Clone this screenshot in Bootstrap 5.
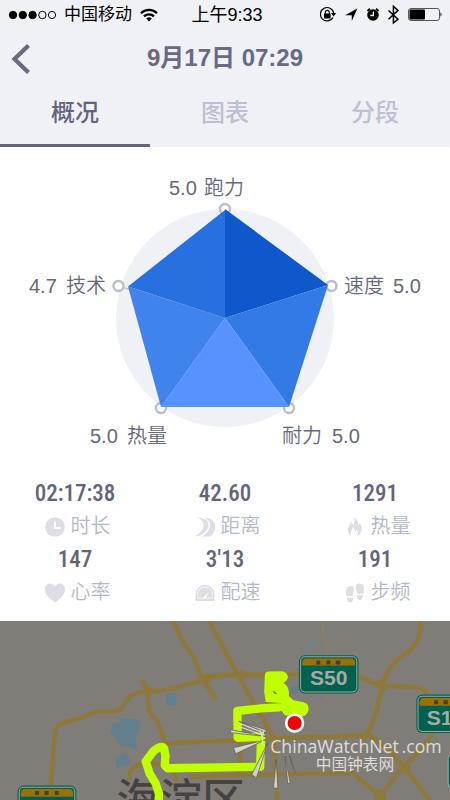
<!DOCTYPE html>
<html lang="zh-CN">
<head>
<meta charset="utf-8">
<meta name="viewport" content="width=device-width, initial-scale=1">
<title>9月17日 07:29</title>
<link href="https://cdn.jsdelivr.net/npm/bootstrap@5.3.0/dist/css/bootstrap.min.css" rel="stylesheet">
<style>
body { font-family: "Liberation Sans", "Noto Sans CJK SC", sans-serif; color: #62657a; background: #fff; }
.top-area { background: #f0f1f7; }
.status-line { height: 30px; color: #000; font-size: 17px; line-height: 30px; }
.status-time { font-size: 18px; }
.status-line svg, .meta svg, .back-btn svg { display: block; }
.title-line { height: 56px; }
.title-line h1 { font-size: 24px; line-height: 58px; font-weight: 700; color: #676a80; }
.back-btn { width: 44px; height: 56px; color: #676a80; }
.tabs-line a { height: 61px; line-height: 54px; font-size: 24px; font-weight: 500; color: #bcc0d2; border-bottom: 3px solid transparent; text-decoration: none; }
.tabs-line a.active { color: #62657a; border-bottom-color: #62657a; }
.chart text { font-size: 20px; fill: #66687c; font-weight: 350; }
.figures { padding-bottom: 14px; }
.figure-value { font-family: "Roboto Condensed", "Liberation Sans Narrow", "Liberation Sans", sans-serif; font-weight: 500; font-size: 23px; line-height: 37px; }
.meta { font-size: 20px; line-height: 29px; font-weight: 350; color: #b4b8cc; gap: 5px; padding-left: 6px; }
.meta svg { color: #dcdde5; }
.map-area { background: #807d79; min-height: 178px; }
.sign { font-family: "Liberation Sans", sans-serif; font-weight: 700; font-size: 63px; fill: #a8aaa6; }
.district { font-size: 128px; font-weight: 500; fill: #454341; }
.mark-en { font-family: "Open Sans", sans-serif; font-size: 53px; fill: #dedddb; }
.mark-cn { font-size: 47px; fill: #dedddb; }
</style>
<script src="https://cdn.jsdelivr.net/npm/bootstrap@5.3.0/dist/js/bootstrap.bundle.min.js"></script>
</head>
<body>
<div class="d-flex flex-column min-vh-100">
<header class="top-area">
  <div class="status-line d-flex align-items-center justify-content-between px-2">
    <div class="d-flex align-items-center gap-2">
      <svg width="48" height="10" viewBox="0 0 48 10" aria-hidden="true"><g stroke="#000" stroke-width="1"><circle cx="5" cy="5" r="3.7"/><circle cx="14.8" cy="5" r="3.7"/><circle cx="24.6" cy="5" r="3.7"/><g fill="none"><circle cx="34.4" cy="5" r="3.7"/><circle cx="44" cy="5" r="3.6"/></g></g></svg>
      <span>中国移动</span>
      <svg width="18" height="14" viewBox="0 0 18 14" fill="none" stroke="#000" stroke-width="2.3" aria-hidden="true"><path d="M1 5.2a11.4 11.4 0 0 1 16 0M4 8.4a7.1 7.1 0 0 1 10 0"/><path d="M6.2 10.6a4 4 0 0 1 5.6 0L9 13.5z" fill="#000" stroke="none"/></svg>
    </div>
    <span class="status-time pe-4">上午9:33</span>
    <svg width="122" height="20" viewBox="320 5 122 20" aria-hidden="true">
      <path d="M333 17.5a6.7 6.7 0 1 1 .8-4" fill="none" stroke="#000" stroke-width="1.2"/><path d="M331 13h5.2l-2.6 3.4z"/><rect x="324" y="13.5" width="6.6" height="5" rx=".6"/><path d="M325.3 14v-1.6a2 2 0 0 1 4 0V14" fill="none" stroke="#000" stroke-width="1.1"/>
      <path d="M345 15.3 357.3 8.5 351.8 21v-5.7z"/>
      <circle cx="373" cy="15" r="5.8"/><path d="M367.5 11l2.5-2.2M378.5 11l-2.5-2.2" stroke="#000" stroke-width="1.8"/><path d="M373.3 11.5v4h-3" stroke="#f0f1f7" stroke-width="1.3" fill="none"/>
      <path d="M388.5 10.5l9.5 8.7-4.6 3.8V6.2l4.6 4.2-9.5 8.8" fill="none" stroke="#000" stroke-width="1.5"/>
      <rect x="408.5" y="8.5" width="31" height="12" rx="2.5" fill="none" stroke="#555"/><rect x="409.5" y="9.5" width="15.5" height="10" rx="1"/><path d="M440.5 12.2q2 2.3 0 4.6z"/>
    </svg>
  </div>
  <div class="title-line d-flex align-items-center">
    <button type="button" class="back-btn btn p-0 border-0" aria-label="返回"><svg width="44" height="34" viewBox="0 0 44 34" fill="none" stroke="currentColor" stroke-width="4.2"><path d="M28.5 4.5 14.5 18l14 13.5"/></svg></button>
    <h1 class="flex-grow-1 text-center m-0">9月17日 07:29</h1>
    <div class="back-btn"></div>
  </div>
  <nav class="tabs-line row g-0 text-center">
    <a class="col active" href="#overview" aria-current="page">概况</a>
    <a class="col" href="#charts">图表</a>
    <a class="col" href="#splits">分段</a>
  </nav>
</header>

<main class="flex-grow-1 d-flex flex-column">
  <svg class="chart w-100" viewBox="0 147 450 328" role="img" aria-label="能力图">
    <circle cx="225" cy="318" r="109" fill="#f0f1f7"/>
    <path d="M118 286l107 32" stroke="#bfc2d2" stroke-width="1.5"/>
    <g fill="#fff" stroke="#b9bdcf" stroke-width="2.4"><circle cx="225" cy="209" r="5"/><circle cx="331.5" cy="286" r="5"/><circle cx="289" cy="408" r="5"/><circle cx="161" cy="408" r="5"/><circle cx="118.5" cy="286" r="5"/></g>
    <path d="M225 318V210L128 286.5z" fill="#286fdf"/>
    <path d="M225 318V209L328 285z" fill="#0f58cb"/>
    <path d="M225 318 328 285 289 407z" fill="#337ae6"/>
    <path d="M225 318 289 407H161z" fill="#5793ff"/>
    <path d="M225 318 161 407 128 286.5z" fill="#4183ec"/>
    <text x="169" y="195">5.0</text><text x="204" y="195">跑力</text>
    <text x="29" y="293">4.7</text><text x="66" y="293">技术</text>
    <text x="344" y="293">速度</text><text x="393" y="293">5.0</text>
    <text x="90" y="443">5.0</text><text x="127" y="443">热量</text>
    <text x="282" y="443">耐力</text><text x="332" y="443">5.0</text>
  </svg>

  <section class="figures row g-0 text-center">
    <div class="col-4">
      <div class="figure-value">02:17:38</div>
      <div class="meta d-flex align-items-center justify-content-center"><svg width="20" height="20" viewBox="0 0 20 20"><circle cx="10" cy="10" r="9.8" fill="currentColor"/><path d="M10 4.5V11h5.5" fill="none" stroke="#fff" stroke-width="2"/></svg><span>时长</span></div>
    </div>
    <div class="col-4">
      <div class="figure-value">42.60</div>
      <div class="meta d-flex align-items-center justify-content-center"><svg width="20" height="20" viewBox="0 0 20 20" fill="currentColor"><path d="M3 .5c8 .5 11.5 4 10.5 8.5C12.500 14 8 18.500 0 19.500c6-4 8.500-7.500 8.500-11C8.500 5 6.500 2.500 3 .5z"/><path d="M9 .5c10 1 13 7 11 12.500-1 2.500-3 6-5 6.500H7c5-3 8-7 8-11C15 5 13 2.500 9 .5z"/><path d="M13.800 3.500c2 5-.5 11-6.700 15.500" fill="none" stroke="#fff" stroke-width=".7"/></svg><span>距离</span></div>
    </div>
    <div class="col-4">
      <div class="figure-value">1291</div>
      <div class="meta d-flex align-items-center justify-content-center"><svg width="20" height="20" viewBox="0 0 20 20" fill="currentColor"><path d="M9 .8c3.5 2 4.8 4.5 4 8 .9-.6 1.3-1.8 1.2-3 3 3 3.5 7.500 1 10.500-.8 1.200-2 2-3.200 2.400 1.500-2.200 1-4.300-.6-6.100-.2 1.400-.8 2-1.500 2.400.2-2.500-.8-4.400-2.300-5.500.3 3-1.900 4.300-2 6.600 0 1 .4 1.900 1 2.700C3.300 17 2 14 3.200 10.800c.9-2.400 2.600-3.400 2.300-6 1.700 1 2.500 2.300 2.700 3.900C9.700 6 9.900 3.400 9 .8z"/></svg><span>热量</span></div>
    </div>
    <div class="col-4">
      <div class="figure-value">147</div>
      <div class="meta d-flex align-items-center justify-content-center"><svg width="20" height="20" viewBox="0 0 20 20" fill="currentColor"><path d="M10 19.500C4 15 0 11.500 0 6.500 0 0 7-1.500 10 3.500 13-1.500 20 0 20 6.500 20 11.500 16 15 10 19.500z"/></svg><span>心率</span></div>
    </div>
    <div class="col-4">
      <div class="figure-value">3'13</div>
      <div class="meta d-flex align-items-center justify-content-center"><svg width="20" height="20" viewBox="0 0 20 20"><path d="M.5 18V11.500a9.500 9.500 0 0 1 19 0V18z" fill="currentColor"/><path d="M2.500 13v-1.500a7.500 7.500 0 0 1 15 0V13" fill="none" stroke="#fff" stroke-width=".8"/><path d="M2 15h16" stroke="#fff" stroke-width=".8"/><path d="M8.500 14.200 14.500 8.500l-4.500 7z" fill="#fff"/></svg><span>配速</span></div>
    </div>
    <div class="col-4">
      <div class="figure-value">191</div>
      <div class="meta d-flex align-items-center justify-content-center"><svg width="20" height="20" viewBox="0 0 20 20" fill="currentColor"><path d="M1.500 13C.5 8.500.8 3.500 5 3s4.500 3.500 3.200 6.500c-.5 1.400-.2 2.500-.3 3.800zM2 14.500l6 .3c.3 3-.8 4.700-2.800 4.700S2 17.500 2 14.500zM18.500 10.500C19.500 6 19.500 1 15 .5s-5 3.500-3.500 6.500c.6 1.400.3 2.500.5 3.800zM18 12l-6 .3c-.2 3 .8 4.700 2.800 4.700S18 15 18 12z"/></svg><span>步频</span></div>
    </div>
  </section>

  <section class="map-area flex-grow-1 d-flex">
    <svg class="w-100" viewBox="0 20 1350 535" preserveAspectRatio="xMidYMin slice" role="img" aria-label="路线地图">
      <path d="M0 0H1350V555H0z" fill="#807d79"/>
      <g fill="#617f8c"><path d="M499 237h31v36h-31zM360 311l52 3 11 13-6 23-9 15 6 44-29-13-18 1-20-28-15-14 9-29 19-3zM346 430l24-14 9 2 14 18-4 14-23 1-14 10zM870 215h25v22h-25z"/></g>
      <path d="M912 112l34-28" stroke="#6d8290" stroke-width="11"/>
      <g fill="none" stroke="#8e793d" stroke-width="14" stroke-linejoin="round" stroke-linecap="round">
        <path d="M154 510l14-160q4-20 28-27l49-13 38-18 63-2q16-2 25-16l16-24q8-10 37-17l58-4 118-28 50-18 200-2M430 201l13 34 6 57 24 28 10 26 13 45M518 15l35 75 30 40 20 58 42 60M625 15l86 162 55 98 55 95 10 185"/>
        <path d="M675 180h225M1075 187l66 26 110 5q24 4 25 20M1260 15c0 60-10 78-55 110-35 25-48 50-60 88l-15 70-17 50-25 40M500 386l330-15 275-10 55 40 55 61 64 83 20 20M575 485l480-12 85 70M1296 355l-32 47-60 58-75 95M388 490c0-26 18-40 55-48M440 442l75 15 15 37M720 380v100"/>
      </g>
      <path d="M966 15c-3 50 20 80 20 135l-6 105" fill="none" stroke="#8b8063" stroke-width="6"/>
      <g fill="#8e793d"><path d="M590 195l30-18 27 3-16 26zM695 180l34-14 17 14-18 18zM420 232l23-20 25 14-21 18zM1122 207l24-19 17 30-18 21zM1190 460l18-20 22 17-16 20zM1120 540l15-22 20 20v17h-30z"/></g>
      <g>
        <rect x="896" y="122" width="178" height="115" rx="18" fill="#00624e"/><rect x="901" y="127" width="168" height="105" rx="13" fill="none" stroke="#a3a6a0" stroke-width="3"/><path d="M906 153v-8q0-13 13-13h132q13 0 13 13v8z" fill="#9b7107"/><path d="M948 138h12v12h-12zM978 138h12v12h-12zM1006 138h14v12h-14z" fill="#463f29"/>
        <text class="sign" x="985" y="211" text-anchor="middle">S50</text>
        <rect x="1247" y="240" width="178" height="115" rx="18" fill="#00624e"/><rect x="1252" y="245" width="168" height="105" rx="13" fill="none" stroke="#a3a6a0" stroke-width="3"/><path d="M1257 273v-10q0-13 13-13h132v23z" fill="#9b7107"/><path d="M1300 257h12v12h-12zM1328 257h13v12h-13z" fill="#463f29"/>
        <text class="sign" x="1278" y="330">S1</text>
        <rect x="1342" y="417" width="90" height="104" rx="15" fill="#00624e" stroke="#a3a6a0" stroke-width="3"/>
        <rect x="55" y="512" width="176" height="110" rx="18" fill="#00624e"/><rect x="60" y="517" width="166" height="110" rx="13" fill="none" stroke="#a3a6a0" stroke-width="3"/><path d="M65 545v-10q0-13 13-13h130q13 0 13 13v10z" fill="#9b7107"/><path d="M107 528h12v12h-12zM136 528h12v12h-12zM166 528h12v12h-12z" fill="#463f29"/>
      </g>
      <text class="district" x="351" y="600">海淀区</text>
      <g fill="none" stroke="#bfff00" stroke-width="25" stroke-linecap="round" stroke-linejoin="round">
        <path d="M476 565l2-27-10-32-18-30-12-36 23-31q24-20 32-8l4 22-2 28 8 9 277-4 3-90-70 3-1-80 70-8 55-3"/>
      </g>
      <path d="M794 182q1-10 12-11l40-1q14 3 17 15 0 12-13 20 15 10 16 27v13l14 12 30 6q16 4 15 22-4 18-22 21h-20l-30-5-10-14-1-22-45-3-5-30z" fill="#bfff00"/>
      <path d="M819 227l13 12-11-2z" fill="#607080"/>
      <g fill="#d2d1c8" stroke="#55554b" stroke-width="2"><path d="M797 365l-105-20v9zM796 375l-96 24 7 18zM803 384l-48 95 14 10zM828 435l-8 84 13 1zM854 425l9 82 7-4zM799 354l-83-34 81 25zM868 422l15 54 2-3z"/></g>
      <g stroke="#e1dfce" stroke-width="3"><path d="M715 324l76 31M712 334l78 27M780 346l10 40M790 348l-5 42"/></g>
      <circle cx="883" cy="325" r="25" fill="#f60000" stroke="#fff" stroke-width="8"/>
      <text class="mark-en" x="810" y="414">ChinaWatchNet<tspan dx="8">.com</tspan></text>
      <text class="mark-cn" x="946" y="466">中国钟表网</text>
    </svg>
  </section>
</main>
</div>
</body>
</html>
